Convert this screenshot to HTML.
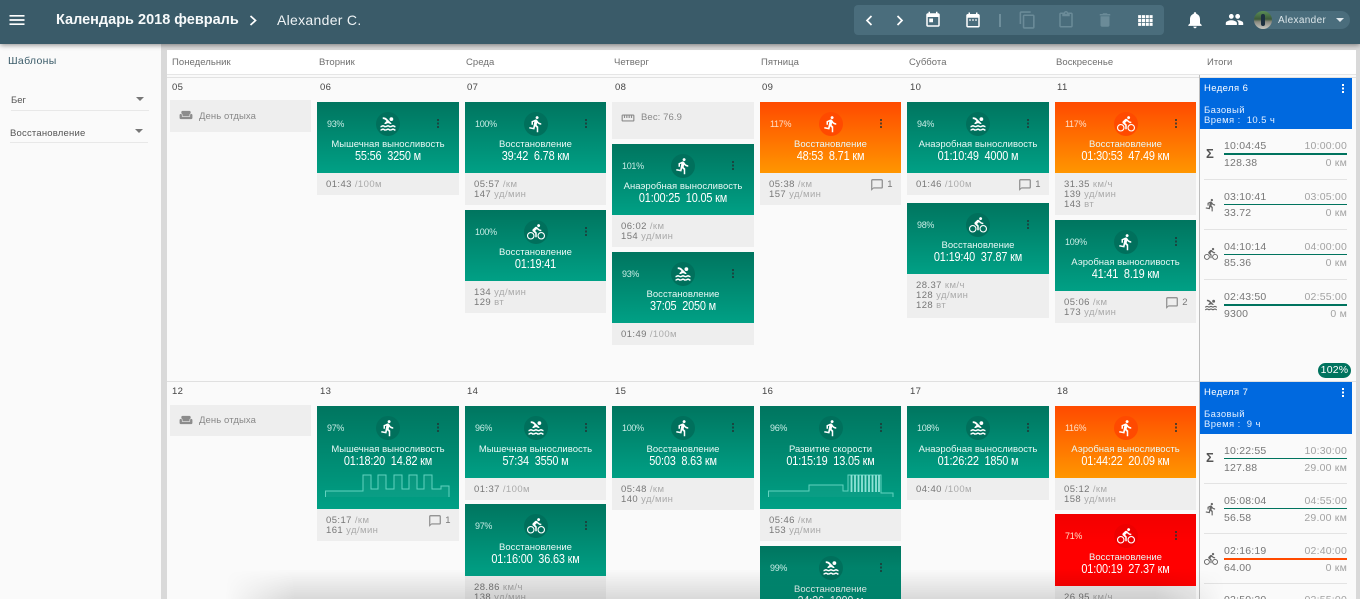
<!DOCTYPE html>
<html lang="ru"><head><meta charset="utf-8"><title>Календарь</title>
<style>
*{box-sizing:border-box}
html,body{margin:0;padding:0;width:1360px;height:599px;overflow:hidden;background:#d9d9d9;font-family:"Liberation Sans",sans-serif}
#root{position:relative;width:1360px;height:599px;overflow:hidden;background:#d9d9d9}
.a{position:absolute}
#hd{left:0;top:0;width:1360px;height:44px;background:#3a5b69;box-shadow:0 1px 5px rgba(0,0,0,.45);z-index:5;color:#fff}
#tb{left:854px;top:5px;width:310px;height:30px;background:#4a6d7c;border-radius:4px}
svg{display:block}
.ic{position:absolute;fill:#fff}
#side{left:0;top:44px;width:161px;height:555px;background:#fafafa}
#main{left:167px;top:50px;width:1189px;height:549px;background:#fafafa;border-radius:2px 2px 0 0;overflow:hidden}
#dh{left:167px;top:50px;width:1189px;height:25px;background:#fff;border-bottom:1px solid #e6e6e6}
.dn{position:absolute;top:57px;font-size:9.5px;color:#6f6f6f;letter-spacing:.05px;line-height:11px}
.d{position:absolute;font-size:9.5px;color:#444;letter-spacing:.4px;line-height:11px}
.c{position:absolute;height:71px;width:142px;background:linear-gradient(#00755f,#00a085);color:#fff;text-align:center}
.o{background:linear-gradient(#ff4a00,#ff9600)}
.r{background:linear-gradient(#f20000,#ff0000 40%)}
.c .p{position:absolute;left:10px;top:17px;font-size:9px;line-height:11px;color:#c7ece5;letter-spacing:-.3px}
.o .p,.r .p{color:#ffe0c8}
.k{position:absolute;left:59px;top:10px;width:24px;height:24px;border-radius:50%;background:#00705c}
.o .k{background:#ff4a00}.r .k{background:#ee0000}
.k svg{position:absolute;left:3px;top:3px;width:18px;height:18px;fill:#fff}
.m{position:absolute;left:120px;top:17px;width:2px;height:2px;background:#233;box-shadow:0 3.5px 0 #233,0 7px 0 #233;opacity:.75}
.n{position:absolute;left:0;right:0;top:37px;font-size:9.5px;line-height:12px;letter-spacing:.02px;color:#e8f8f5;white-space:nowrap}
.v{position:absolute;left:0;right:0;top:46px;font-size:13px;line-height:16px;white-space:nowrap;letter-spacing:-.2px;transform:scaleX(.84)}
.w2 .n{top:38px}.w2 .v{top:47px}
.f{position:absolute;width:142px;background:#eee;padding:7px 0 0 9px;font-size:9.5px;line-height:10px;color:#777;letter-spacing:.42px;white-space:nowrap}
.f i{font-style:normal;color:#aaa;margin-left:3px}
.f .cm{position:absolute;right:8px;top:6px;font-size:9.5px;color:#777;line-height:11px}
.f .cm svg{position:absolute;right:9px;top:-1px;width:14px;height:14px;fill:#888}
.g{position:absolute;background:#eee;font-size:9.5px;color:#888;letter-spacing:.1px;line-height:11px}
.g svg{position:absolute;fill:#8c8c8c}
.wk{position:absolute;left:1200px;width:152px;height:51px;background:#0069df;color:#fff;font-size:9.5px;line-height:10px;letter-spacing:.4px}
.wk b{position:absolute;left:4px;top:6px;font-weight:400}
.wk span{position:absolute;left:4px;top:28px;color:#e3efff}
.wk u{position:absolute;right:8px;top:6px;width:2px;height:2px;background:#fff;box-shadow:0 3.5px 0 #fff,0 7px 0 #fff}
.t{position:absolute;font-size:10.5px;line-height:12px;color:#777;letter-spacing:.2px;white-space:nowrap}
.t.l{left:1224px}.t.e{right:13px;color:#a2a2a2}
.ln{position:absolute;left:1224px;width:123px;height:1px;background:#00735e}
.sp{position:absolute;left:1204px;width:143px;height:1px;background:#e3e3e3}
.ti{position:absolute;left:1204px;width:14px;height:14px;fill:#666}
.sg{position:absolute;left:1206px;font-size:13px;line-height:14px;color:#555;font-weight:700}
#fade{left:225px;top:569px;width:1000px;height:30px;z-index:4;background:linear-gradient(rgba(0,0,0,0),rgba(0,0,0,.13));-webkit-mask-image:linear-gradient(90deg,transparent,#000 70px,#000 930px,transparent);mask-image:linear-gradient(90deg,transparent,#000 70px,#000 930px,transparent)}
</style></head><body>
<div id="root">
<svg width="0" height="0" style="position:absolute"><defs>
<symbol id="r" viewBox="0 0 24 24"><path d="M13.49 5.48c1.1 0 2-.9 2-2s-.9-2-2-2-2 .9-2 2 .9 2 2 2zm-3.6 13.9l1-4.4 2.1 2v6h2v-7.5l-2.1-2 .6-3c1.3 1.5 3.3 2.5 5.5 2.5v-2c-1.9 0-3.5-1-4.3-2.4l-1-1.6c-.4-.6-1-1-1.7-1-.3 0-.5.1-.8.1l-5.2 2.2v4.7h2v-3.4l1.8-.7-1.6 8.1-4.9-1-.4 2 7 1.4z"/></symbol>
<symbol id="b" viewBox="0 0 24 24"><path d="M15.5 5.5c1.1 0 2-.9 2-2s-.9-2-2-2-2 .9-2 2 .9 2 2 2zM5 12c-2.8 0-5 2.2-5 5s2.2 5 5 5 5-2.2 5-5-2.2-5-5-5zm0 8.5c-1.9 0-3.5-1.6-3.5-3.5s1.6-3.5 3.5-3.5 3.5 1.6 3.5 3.5-1.6 3.5-3.5 3.5zm5.8-10l2.4-2.4.8.8c1.3 1.3 3 2.1 5.1 2.1V9c-1.5 0-2.7-.6-3.6-1.5l-1.9-1.9c-.5-.4-1-.6-1.6-.6s-1.1.2-1.4.6L7.8 8.4c-.4.4-.6.9-.6 1.4 0 .6.2 1.1.6 1.4L11 14v5h2v-6.2l-2.2-2.3zM19 12c-2.8 0-5 2.2-5 5s2.2 5 5 5 5-2.2 5-5-2.2-5-5-5zm0 8.5c-1.9 0-3.5-1.6-3.5-3.5s1.6-3.5 3.5-3.5 3.5 1.6 3.5 3.5-1.6 3.5-3.5 3.5z"/></symbol>
<symbol id="s" viewBox="0 0 24 24"><path d="M22 21c-1.11 0-1.73-.37-2.18-.64-.37-.22-.6-.36-1.15-.36-.56 0-.78.13-1.15.36-.46.27-1.07.64-2.18.64s-1.73-.37-2.18-.64c-.37-.22-.6-.36-1.15-.36-.56 0-.78.13-1.15.36-.46.27-1.08.64-2.19.64-1.11 0-1.73-.37-2.18-.64-.37-.23-.6-.36-1.15-.36s-.78.13-1.15.36c-.46.27-1.08.64-2.19.64v-2c.56 0 .78-.13 1.15-.36.46-.27 1.08-.64 2.19-.64s1.73.37 2.18.64c.37.22.6.36 1.15.36.56 0 .78-.13 1.15-.36.46-.27 1.08-.64 2.19-.64 1.11 0 1.73.37 2.18.64.37.22.6.36 1.15.36s.78-.13 1.15-.36c.45-.27 1.07-.64 2.18-.64s1.73.37 2.18.64c.37.23.59.36 1.15.36v2zm0-4.5c-1.11 0-1.73-.37-2.18-.64-.37-.22-.6-.36-1.15-.36-.56 0-.78.13-1.15.36-.45.27-1.07.64-2.18.64s-1.73-.37-2.18-.64c-.37-.22-.6-.36-1.15-.36-.56 0-.78.13-1.15.36-.45.27-1.07.64-2.18.64s-1.73-.37-2.18-.64c-.37-.22-.6-.36-1.15-.36s-.78.13-1.15.36c-.47.27-1.09.64-2.2.64v-2c.56 0 .78-.13 1.15-.36.45-.27 1.07-.64 2.18-.64s1.73.37 2.18.64c.37.22.6.36 1.15.36.56 0 .78-.13 1.15-.36.45-.27 1.07-.64 2.18-.64s1.73.37 2.18.64c.37.22.6.36 1.15.36s.78-.13 1.15-.36c.45-.27 1.07-.64 2.18-.64s1.73.37 2.18.64c.37.22.6.36 1.15.36v2zM8.67 12c.56 0 .78-.13 1.15-.36.46-.27 1.08-.64 2.19-.64 1.11 0 1.73.37 2.18.64.37.22.6.36 1.15.36s.78-.13 1.15-.36c.12-.07.26-.15.41-.23L10.48 5C8.93 3.45 7.5 2.99 5 3v2.5c1.82-.01 2.89.39 4 1.5l1 1-3.25 3.25c.31.12.56.27.77.39.37.23.59.36 1.15.36z"/><circle cx="16.5" cy="5.5" r="2.5"/></symbol>
<symbol id="w" viewBox="0 0 24 24"><path d="M21 10c-1.1 0-2 .9-2 2v3H5v-3c0-1.1-.9-2-2-2s-2 .9-2 2v5c0 1.1.9 2 2 2h18c1.1 0 2-.9 2-2v-5c0-1.1-.9-2-2-2zm-3-5H6c-1.1 0-2 .9-2 2v2.15c1.16.41 2 1.51 2 2.82V14h12v-2.03c0-1.3.84-2.4 2-2.82V7c0-1.1-.9-2-2-2z"/></symbol>
<symbol id="cm" viewBox="0 0 24 24"><path d="M20 2H4c-1.1 0-2 .9-2 2v18l4-4h14c1.1 0 2-.9 2-2V4c0-1.1-.9-2-2-2zm0 14H6l-2 2V4h16v12z"/></symbol>
</defs></svg>

<div class="a" id="side">
<div class="a" style="left:8px;top:11px;font-size:10.5px;line-height:12px;color:#3a5b69;letter-spacing:.3px">Шаблоны</div>
<div class="a" style="left:11px;top:51px;font-size:9.5px;line-height:12px;color:#555">Бег</div>
<div class="a" style="left:136px;top:53px;border:4px solid transparent;border-top:4px solid #777"></div>
<div class="a" style="left:11px;top:66px;width:138px;height:1px;background:#e8e8e8"></div>
<div class="a" style="left:10px;top:84px;font-size:9.5px;line-height:12px;color:#555;letter-spacing:.2px">Восстановление</div>
<div class="a" style="left:135px;top:85px;border:4px solid transparent;border-top:4px solid #777"></div>
<div class="a" style="left:10px;top:98px;width:138px;height:1px;background:#e8e8e8"></div>
</div>

<div class="a" id="main"></div>
<div class="a" id="dh" style="height:25px"></div>
<div class="a" style="left:167px;top:77px;width:1189px;height:1px;background:#e2e2e2"></div>
<div class="a" style="left:167px;top:381px;width:1189px;height:1px;background:#e0e0e0"></div>
<div class="a" style="left:1199px;top:75px;width:1px;height:524px;background:#bdbdbd"></div>

<div class="dn" style="left:172px">Понедельник</div><div class="dn" style="left:319px">Вторник</div><div class="dn" style="left:466px">Среда</div><div class="dn" style="left:614px">Четверг</div><div class="dn" style="left:761px">Пятница</div><div class="dn" style="left:909px">Суббота</div><div class="dn" style="left:1056px">Воскресенье</div><div class="dn" style="left:1207px">Итоги</div>

<div class="d" style="left:172px;top:82px">05</div><div class="d" style="left:320px;top:82px">06</div><div class="d" style="left:467px;top:82px">07</div><div class="d" style="left:615px;top:82px">08</div><div class="d" style="left:762px;top:82px">09</div><div class="d" style="left:910px;top:82px">10</div><div class="d" style="left:1057px;top:82px">11</div>
<div class="d" style="left:172px;top:386px">12</div><div class="d" style="left:320px;top:386px">13</div><div class="d" style="left:467px;top:386px">14</div><div class="d" style="left:615px;top:386px">15</div><div class="d" style="left:762px;top:386px">16</div><div class="d" style="left:910px;top:386px">17</div><div class="d" style="left:1057px;top:386px">18</div>

<!-- rest -->
<div class="g" style="left:170px;top:100px;width:141px;height:32px"><svg style="left:9px;top:8px;width:14px;height:14px"><use href="#w"/></svg><span class="a" style="left:29px;top:11px;white-space:nowrap">День отдыха</span></div>
<div class="g" style="left:170px;top:405px;width:141px;height:31px"><svg style="left:9px;top:8px;width:14px;height:14px"><use href="#w"/></svg><span class="a" style="left:29px;top:10px;white-space:nowrap">День отдыха</span></div>
<div class="g" style="left:612px;top:102px;width:142px;height:37px"><svg viewBox="0 0 24 24" style="left:9px;top:9px;width:14px;height:14px"><path d="M21 6H3c-1.100 0-2 .9-2 2v8c0 1.100.9 2 2 2h18c1.100 0 2-.9 2-2V8c0-1.100-.9-2-2-2zm0 10H3V8h2v4h2V8h2v4h2V8h2v4h2V8h2v4h2V8h2v8z"/></svg><span class="a" style="left:29px;top:10px;white-space:nowrap">Вес: 76.9</span></div>

<!-- week 1 -->
<div class="c" style="left:317px;top:102px"><span class="p">93%</span><span class="k"><svg><use href="#s"/></svg></span><span class="m"></span><div class="n">Мышечная выносливость</div><div class="v">55:56 &nbsp;3250 м</div></div>
<div class="f" style="left:317px;top:173px;height:22px">01:43<i>/100м</i></div>

<div class="c" style="left:465px;top:102px;width:141px"><span class="p">100%</span><span class="k"><svg><use href="#r"/></svg></span><span class="m"></span><div class="n">Восстановление</div><div class="v">39:42 &nbsp;6.78 км</div></div>
<div class="f" style="left:465px;top:173px;width:141px;height:32px">05:57<i>/км</i><br>147<i>уд/мин</i></div>
<div class="c" style="left:465px;top:210px;width:141px"><span class="p">100%</span><span class="k"><svg><use href="#b"/></svg></span><span class="m"></span><div class="n">Восстановление</div><div class="v">01:19:41</div></div>
<div class="f" style="left:465px;top:281px;width:141px;height:32px">134<i>уд/мин</i><br>129<i>вт</i></div>

<div class="c" style="left:612px;top:144px"><span class="p">101%</span><span class="k"><svg><use href="#r"/></svg></span><span class="m"></span><div class="n">Анаэробная выносливость</div><div class="v">01:00:25 &nbsp;10.05 км</div></div>
<div class="f" style="left:612px;top:215px;height:32px">06:02<i>/км</i><br>154<i>уд/мин</i></div>
<div class="c" style="left:612px;top:252px"><span class="p">93%</span><span class="k"><svg><use href="#s"/></svg></span><span class="m"></span><div class="n">Восстановление</div><div class="v">37:05 &nbsp;2050 м</div></div>
<div class="f" style="left:612px;top:323px;height:22px">01:49<i>/100м</i></div>

<div class="c o" style="left:760px;top:102px;width:141px"><span class="p">117%</span><span class="k"><svg><use href="#r"/></svg></span><span class="m"></span><div class="n">Восстановление</div><div class="v">48:53 &nbsp;8.71 км</div></div>
<div class="f" style="left:760px;top:173px;width:141px;height:32px">05:38<i>/км</i><br>157<i>уд/мин</i><span class="cm">1<svg><use href="#cm"/></svg></span></div>

<div class="c" style="left:907px;top:102px"><span class="p">94%</span><span class="k"><svg><use href="#s"/></svg></span><span class="m"></span><div class="n">Анаэробная выносливость</div><div class="v">01:10:49 &nbsp;4000 м</div></div>
<div class="f" style="left:907px;top:173px;height:22px">01:46<i>/100м</i><span class="cm">1<svg><use href="#cm"/></svg></span></div>
<div class="c" style="left:907px;top:203px"><span class="p">98%</span><span class="k"><svg><use href="#b"/></svg></span><span class="m"></span><div class="n">Восстановление</div><div class="v">01:19:40 &nbsp;37.87 км</div></div>
<div class="f" style="left:907px;top:274px;height:44px">28.37<i>км/ч</i><br>128<i>уд/мин</i><br>128<i>вт</i></div>

<div class="c o" style="left:1055px;top:102px;width:141px"><span class="p">117%</span><span class="k"><svg><use href="#b"/></svg></span><span class="m"></span><div class="n">Восстановление</div><div class="v">01:30:53 &nbsp;47.49 км</div></div>
<div class="f" style="left:1055px;top:173px;width:141px;height:42px">31.35<i>км/ч</i><br>139<i>уд/мин</i><br>143<i>вт</i></div>
<div class="c" style="left:1055px;top:220px;width:141px"><span class="p">109%</span><span class="k"><svg><use href="#r"/></svg></span><span class="m"></span><div class="n">Аэробная выносливость</div><div class="v">41:41 &nbsp;8.19 км</div></div>
<div class="f" style="left:1055px;top:291px;width:141px;height:32px">05:06<i>/км</i><br>173<i>уд/мин</i><span class="cm">2<svg><use href="#cm"/></svg></span></div>

<!-- week 2 -->
<div class="w2">
<div class="c" style="left:317px;top:406px;height:103px"><span class="p">97%</span><span class="k"><svg><use href="#r"/></svg></span><span class="m"></span><div class="n">Мышечная выносливость</div><div class="v">01:18:20 &nbsp;14.82 км</div>
<svg class="a" style="left:0;top:0" width="142" height="103"><path d="M8.500 91V85H46V69H54V83H61V69H69V83H77V69H85V83H92V69H100V83H107V69H115V83H124V80H132V91" fill="rgba(255,255,255,.04)" stroke="#62d2bf" stroke-width="1"/></svg></div>
<div class="f" style="left:317px;top:509px;height:32px">05:17<i>/км</i><br>161<i>уд/мин</i><span class="cm">1<svg><use href="#cm"/></svg></span></div>

<div class="c" style="left:465px;top:406px;width:141px;height:72px"><span class="p">96%</span><span class="k"><svg><use href="#s"/></svg></span><span class="m"></span><div class="n">Мышечная выносливость</div><div class="v">57:34 &nbsp;3550 м</div></div>
<div class="f" style="left:465px;top:478px;width:141px;height:22px">01:37<i>/100м</i></div>
<div class="c" style="left:465px;top:504px;width:141px;height:72px"><span class="p">97%</span><span class="k"><svg><use href="#b"/></svg></span><span class="m"></span><div class="n">Восстановление</div><div class="v">01:16:00 &nbsp;36.63 км</div></div>
<div class="f" style="left:465px;top:576px;width:141px;height:23px;overflow:hidden">28.86<i>км/ч</i><br>138<i>уд/мин</i></div>

<div class="c" style="left:612px;top:406px;height:72px"><span class="p">100%</span><span class="k"><svg><use href="#r"/></svg></span><span class="m"></span><div class="n">Восстановление</div><div class="v">50:03 &nbsp;8.63 км</div></div>
<div class="f" style="left:612px;top:478px;height:32px">05:48<i>/км</i><br>140<i>уд/мин</i></div>

<div class="c" style="left:760px;top:406px;width:141px;height:103px"><span class="p">96%</span><span class="k"><svg><use href="#r"/></svg></span><span class="m"></span><div class="n">Развитие скорости</div><div class="v">01:15:19 &nbsp;13.05 км</div>
<svg class="a" style="left:0;top:0" width="141" height="103"><path d="M8.500 91V85H49V79H83V85H88V69H121V87H133V91" fill="rgba(255,255,255,.04)" stroke="#62d2bf" stroke-width="1"/><path d="M91.500 69V86M95 69V86M98.500 69V86M102 69V86M105.500 69V86M109 69V86M112.500 69V86M116 69V86M119 69V86" stroke="#8fe3d6" stroke-width="1.800" fill="none"/></svg></div>
<div class="f" style="left:760px;top:509px;width:141px;height:32px">05:46<i>/км</i><br>153<i>уд/мин</i></div>
<div class="c" style="left:760px;top:546px;width:141px;height:53px;overflow:hidden;background-size:100% 72px;background-repeat:no-repeat"><span class="p">99%</span><span class="k"><svg><use href="#s"/></svg></span><span class="m"></span><div class="n">Восстановление</div><div class="v">24:26 &nbsp;1000 м</div></div>

<div class="c" style="left:907px;top:406px;height:72px"><span class="p">108%</span><span class="k"><svg><use href="#s"/></svg></span><span class="m"></span><div class="n">Анаэробная выносливость</div><div class="v">01:26:22 &nbsp;1850 м</div></div>
<div class="f" style="left:907px;top:478px;height:22px">04:40<i>/100м</i></div>

<div class="c o" style="left:1055px;top:406px;width:141px;height:72px"><span class="p">116%</span><span class="k"><svg><use href="#r"/></svg></span><span class="m"></span><div class="n">Аэробная выносливость</div><div class="v">01:44:22 &nbsp;20.09 км</div></div>
<div class="f" style="left:1055px;top:478px;width:141px;height:32px">05:12<i>/км</i><br>158<i>уд/мин</i></div>
<div class="c r" style="left:1055px;top:514px;width:141px;height:72px"><span class="p">71%</span><span class="k"><svg><use href="#b"/></svg></span><span class="m"></span><div class="n">Восстановление</div><div class="v">01:00:19 &nbsp;27.37 км</div></div>
<div class="f" style="left:1055px;top:586px;width:141px;height:13px;overflow:hidden">26.95<i>км/ч</i></div>
</div>

<!-- totals week 6 -->
<div class="wk" style="top:78px"><b>Неделя 6</b><span>Базовый<br>Время :&nbsp; 10.5 ч</span><u></u></div>
<div class="sg" style="top:147px">Σ</div>
<div class="t l" style="top:140px">10:04:45</div><div class="t e" style="top:140px">10:00:00</div><div class="ln" style="top:153px;height:2px"></div><div class="t l" style="top:157px">128.38</div><div class="t e" style="top:157px">0 км</div>
<div class="sp" style="top:179px"></div>
<svg class="ti" style="top:198px"><use href="#r"/></svg>
<div class="t l" style="top:191px">03:10:41</div><div class="t e" style="top:191px">03:05:00</div><div class="ln" style="top:204px"></div><div class="t l" style="top:207px">33.72</div><div class="t e" style="top:207px">0 км</div>
<div class="sp" style="top:229px"></div>
<svg class="ti" style="top:247px"><use href="#b"/></svg>
<div class="t l" style="top:241px">04:10:14</div><div class="t e" style="top:241px">04:00:00</div><div class="ln" style="top:254px"></div><div class="t l" style="top:257px">85.36</div><div class="t e" style="top:257px">0 км</div>
<div class="sp" style="top:279px"></div>
<svg class="ti" style="top:298px"><use href="#s"/></svg>
<div class="t l" style="top:291px">02:43:50</div><div class="t e" style="top:291px">02:55:00</div><div class="ln" style="top:304px;height:2px"></div><div class="t l" style="top:308px">9300</div><div class="t e" style="top:308px">0 м</div>
<div class="a" style="left:1318px;top:363px;width:33px;height:15px;border-radius:8px;background:#00735e;color:#fff;font-size:10.500px;line-height:15px;text-align:center;letter-spacing:.2px">102%</div>

<!-- totals week 7 -->
<div class="wk" style="top:382px;height:52px"><b>Неделя 7</b><span>Базовый<br>Время :&nbsp; 9 ч</span><u></u></div>
<div class="sg" style="top:451px">Σ</div>
<div class="t l" style="top:445px">10:22:55</div><div class="t e" style="top:445px">10:30:00</div><div class="ln" style="top:458px"></div><div class="t l" style="top:462px">127.88</div><div class="t e" style="top:462px">29.00 км</div>
<div class="sp" style="top:483px"></div>
<svg class="ti" style="top:502px"><use href="#r"/></svg>
<div class="t l" style="top:495px">05:08:04</div><div class="t e" style="top:495px">04:55:00</div><div class="ln" style="top:508px"></div><div class="t l" style="top:512px">56.58</div><div class="t e" style="top:512px">29.00 км</div>
<div class="sp" style="top:533px"></div>
<svg class="ti" style="top:552px"><use href="#b"/></svg>
<div class="t l" style="top:545px">02:16:19</div><div class="t e" style="top:545px">02:40:00</div><div class="ln" style="top:558px;height:2px;background:#ff4a00"></div><div class="t l" style="top:562px">64.00</div><div class="t e" style="top:562px">0 км</div>
<div class="sp" style="top:583px"></div>
<div class="t l" style="top:594px;height:5px;overflow:hidden">02:50:20</div><div class="t e" style="top:594px;height:5px;overflow:hidden">02:55:00</div>

<!-- bottom shadow -->
<div class="a" id="fade"></div>

<!-- header -->
<div class="a" id="hd">
<svg class="ic" viewBox="0 0 24 24" style="left:7px;top:8px;width:20px;height:24px"><path d="M3 18h18v-2H3v2zm0-5h18v-2H3v2zm0-7v2h18V6H3z"/></svg>
<div class="a" style="left:56px;top:11px;font-size:14.500px;line-height:18px;font-weight:700;white-space:nowrap;color:#f7fafb">Календарь 2018 февраль</div>
<svg class="a" style="left:248px;top:15px" width="10" height="11"><path d="M2.500 1l5 4.500-5 4.500" fill="none" stroke="#fff" stroke-width="1.700"/></svg>
<div class="a" style="left:277px;top:11px;font-size:14px;line-height:18px;white-space:nowrap;letter-spacing:.3px;color:#eef3f5">Alexander C.</div>
<div class="a" id="tb"></div>
<svg class="a" style="left:865px;top:15px" width="9" height="11"><path d="M6.500 1L2 5.500 6.500 10" fill="none" stroke="#fff" stroke-width="1.700"/></svg>
<svg class="a" style="left:895px;top:15px" width="9" height="11"><path d="M2.500 1L7 5.500 2.500 10" fill="none" stroke="#fff" stroke-width="1.700"/></svg>
<svg class="ic" viewBox="0 0 24 24" style="left:924px;top:10px;width:18px;height:20px"><path d="M19 3h-1V1h-2v2H8V1H6v2H5c-1.110 0-1.990.9-1.990 2L3 19c0 1.100.89 2 2 2h14c1.100 0 2-.9 2-2V5c0-1.100-.9-2-2-2zm0 16H5V8h14v11zM7 10h5v5H7z"/></svg>
<svg class="ic" viewBox="0 0 24 24" style="left:964px;top:10px;width:18px;height:20px"><path d="M9 11H7v2h2v-2zm4 0h-2v2h2v-2zm4 0h-2v2h2v-2zm2-7h-1V2h-2v2H8V2H6v2H5c-1.110 0-1.990.9-1.990 2L3 20c0 1.100.89 2 2 2h14c1.100 0 2-.9 2-2V6c0-1.100-.9-2-2-2zm0 16H5V9h14v11z"/></svg>
<div class="a" style="left:999px;top:14px;width:2px;height:13px;background:#6e8e9b"></div>
<svg class="ic" viewBox="0 0 24 24" style="left:1018px;top:10px;width:19px;height:20px;fill:#6b8b98"><path d="M16 1H4c-1.100 0-2 .9-2 2v14h2V3h12V1zm3 4H8c-1.100 0-2 .9-2 2v14c0 1.100.9 2 2 2h11c1.100 0 2-.9 2-2V7c0-1.100-.9-2-2-2zm0 16H8V7h11v14z"/></svg>
<svg class="ic" viewBox="0 0 24 24" style="left:1057px;top:10px;width:18px;height:20px;fill:#6b8b98"><path d="M19 2h-4.180C14.400.84 13.300 0 12 0c-1.300 0-2.400.84-2.820 2H5c-1.100 0-2 .9-2 2v16c0 1.100.9 2 2 2h14c1.100 0 2-.9 2-2V4c0-1.100-.9-2-2-2zm-7 0c.55 0 1 .45 1 1s-.45 1-1 1-1-.45-1-1 .45-1 1-1zm7 18H5V4h2v3h10V4h2v16z"/></svg>
<svg class="ic" viewBox="0 0 24 24" style="left:1096px;top:10px;width:18px;height:20px;fill:#6b8b98"><path d="M6 19c0 1.100.9 2 2 2h8c1.100 0 2-.9 2-2V7H6v12zM19 4h-3.500l-1-1h-5l-1 1H5v2h14V4z"/></svg>
<svg class="ic" viewBox="1.500 3.500 21 17" style="left:1137px;top:14px;width:16px;height:13px"><path d="M3 9h4V5H3v4zm0 5h4v-4H3v4zm5 0h4v-4H8v4zm5 0h4v-4h-4v4zM8 9h4V5H8v4zm5-4v4h4V5h-4zm5 9h4v-4h-4v4zM3 19h4v-4H3v4zm5 0h4v-4H8v4zm5 0h4v-4h-4v4zm5 0h4v-4h-4v4zm0-14v4h4V5h-4z"/></svg>
<svg class="ic" viewBox="0 0 24 24" style="left:1185px;top:10px;width:20px;height:20px"><path d="M12 22c1.100 0 2-.9 2-2h-4c0 1.100.89 2 2 2zm6-6v-5c0-3.070-1.640-5.640-4.500-6.320V4c0-.83-.67-1.500-1.500-1.500s-1.500.67-1.500 1.500v.68C7.630 5.360 6 7.920 6 11v5l-2 2v1h16v-1l-2-2z"/></svg>
<svg class="ic" viewBox="0 0 24 24" style="left:1225px;top:10px;width:19px;height:19px"><path d="M16 11c1.660 0 2.990-1.340 2.990-3S17.660 5 16 5c-1.660 0-3 1.340-3 3s1.340 3 3 3zm-8 0c1.660 0 2.990-1.340 2.990-3S9.660 5 8 5C6.340 5 5 6.340 5 8s1.340 3 3 3zm0 2c-2.330 0-7 1.170-7 3.500V19h14v-2.500c0-2.330-4.670-3.500-7-3.500zm8 0c-.29 0-.62.02-.97.05 1.160.84 1.970 1.970 1.970 3.450V19h6v-2.500c0-2.330-4.670-3.500-7-3.500z"/></svg>
<div class="a" style="left:1254px;top:11px;width:96px;height:18px;border-radius:9px;background:#4a6d7c"></div>
<div class="a" style="left:1254px;top:11px;width:18px;height:18px;border-radius:50%;background:linear-gradient(#5a8f55 0,#3c5a3a 45%,#8a8a80 60%,#c8c8c0 100%);overflow:hidden"><div class="a" style="left:7px;top:3px;width:4px;height:12px;background:#1d3140;border-radius:2px"></div></div>
<div class="a" style="left:1278px;top:15px;font-size:10px;line-height:12px;color:#dbe5e9;letter-spacing:.35px">Alexander</div>
<div class="a" style="left:1336px;top:18px;border:4px solid transparent;border-top:4px solid #dfe8ec"></div>
</div>
</div>
</body></html>
